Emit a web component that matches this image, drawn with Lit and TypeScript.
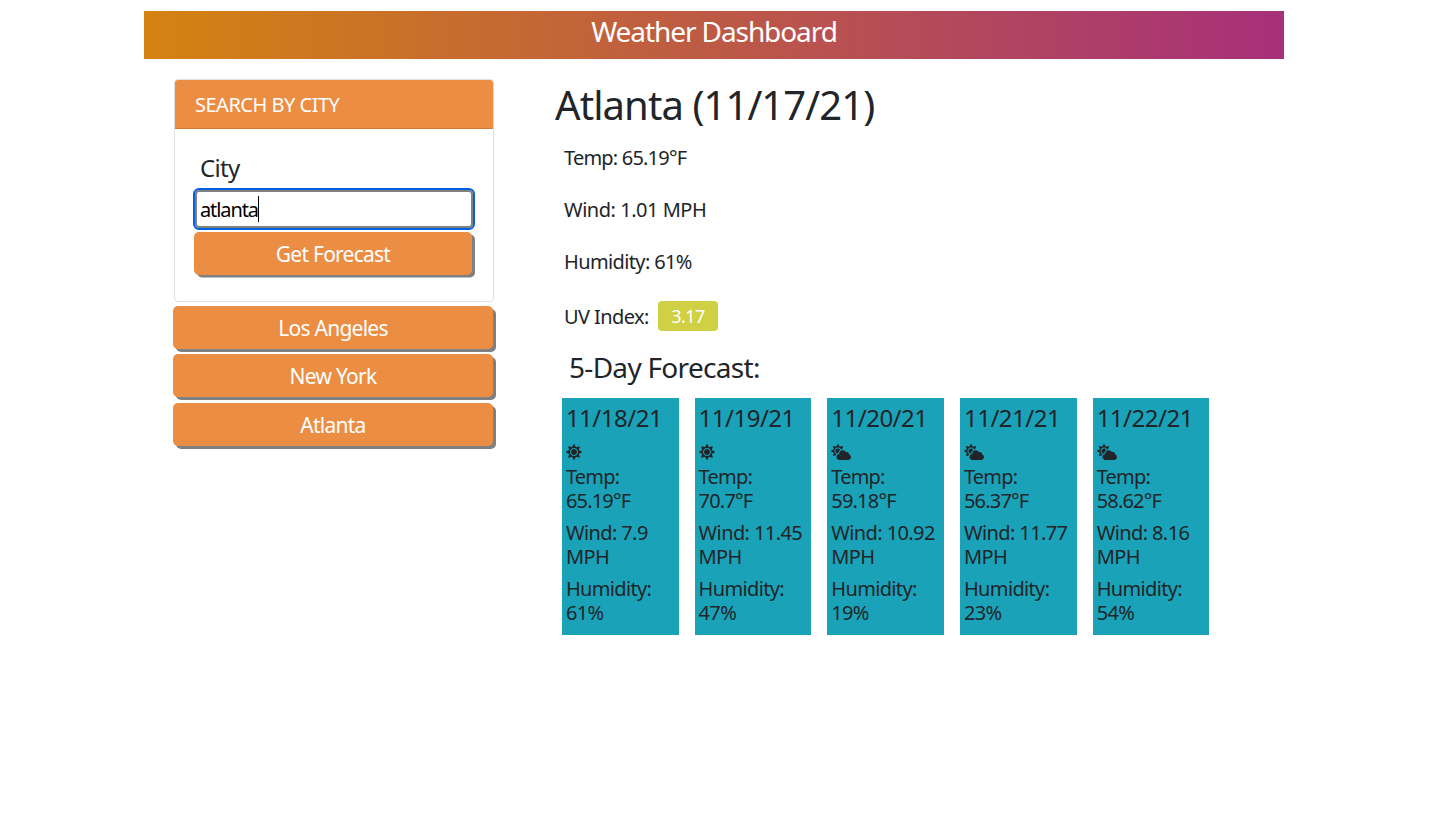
import { LitElement, html, css, svg } from "lit";
import { customElement, property, state } from "lit/decorators.js";

interface Day {
  date: string;
  icon: "sun" | "cloud-sun";
  temp: string;
  wind: string;
  humidity: string;
}

const ICONS = {
  sun: {
    box: "0 0 512 512",
    width: 16,
    d: "M256 160c-52.9 0-96 43.1-96 96s43.1 96 96 96 96-43.1 96-96-43.1-96-96-96zm246.4 80.5l-94.7-47.3 33.5-100.4c4.5-13.6-8.4-26.5-21.9-21.9l-100.4 33.5-47.4-94.8c-6.4-12.8-24.6-12.8-31 0l-47.3 94.7L92.7 70.8c-13.6-4.5-26.5 8.4-21.9 21.9l33.5 100.4-94.7 47.4c-12.8 6.4-12.8 24.6 0 31l94.7 47.3-33.5 100.5c-4.5 13.6 8.4 26.5 21.9 21.9l100.4-33.5 47.3 94.7c6.4 12.8 24.6 12.8 31 0l47.3-94.7 100.4 33.5c13.6 4.5 26.5-8.4 21.9-21.9l-33.5-100.4 94.7-47.3c13-6.5 13-24.7.2-31.1zm-155.9 106c-49.9 49.9-131.1 49.9-181 0-49.9-49.9-49.9-131.1 0-181 49.9-49.9 131.1-49.9 181 0 49.9 49.9 49.9 131.1 0 181z",
  },
  "cloud-sun": {
    box: "0 0 640 512",
    width: 20,
    d: "M575.2 325.7c.2-1.9.8-3.7.8-5.6 0-35.3-28.7-64-64-64-12.6 0-24.2 3.8-34.1 10-17.6-38.8-56.5-66-101.9-66-61.8 0-112 50.1-112 112 0 3 .7 5.8.9 8.7-49.6 3.7-88.9 44.7-88.9 95.3 0 53 43 96 96 96h272c53 0 96-43 96-96 0-42.1-27.2-77.4-64.8-90.4zm-430.4-22.6c-43.7-43.7-43.7-114.7 0-158.3 43.7-43.7 114.7-43.7 158.4 0 9.7 9.7 16.9 20.9 22.3 32.7 9.8-3.7 20.1-6 30.7-7.5L386 81.1c4-11.9-7.3-23.1-19.2-19.2L279 91.2 237.5 8.4C232-2.8 216-2.8 210.4 8.4L169 91.2 81.1 61.9C69.3 58 58 69.3 61.9 81.1l29.3 87.8-82.8 41.5c-11.2 5.6-11.2 21.6 0 27.2l82.8 41.4-29.3 87.8c-4 11.9 7.3 23.1 19.2 19.1l76.1-25.3c6.1-12.4 14-23.7 23.6-33.5-13.1-5.4-25.4-13.4-36-24zm-4.8-79.2c0 40.8 29.3 74.8 67.9 82.3 8-4.7 16.3-8.8 25.2-11.7 5.4-44.3 31-82.5 67.4-105C287.3 160.4 258 140 224 140c-46.3 0-84 37.6-84 83.9z",
  },
};

@customElement("day-card")
class DayCard extends LitElement {
  @property({ attribute: false }) day!: Day;

  static styles = css`
    :host {
      display: block;
      box-sizing: border-box;
      height: 237px;
      padding: 5px 4px 0;
      background: #19a2b8;
      color: #212529;
    }
    .date {
      margin: 0 0 12px;
      font-size: 24px;
      font-weight: 400;
      line-height: 29px;
      letter-spacing: -0.5px;
    }
    .icon {
      display: block;
      height: 16px;
      margin-bottom: 5px;
      fill: currentColor;
    }
    .row {
      margin: 0 0 8px;
      font-size: 20px;
      line-height: 24px;
      letter-spacing: -0.65px;
    }
    .temp {
      letter-spacing: -0.8px;
    }
    .wind {
      letter-spacing: -0.6px;
    }
  `;

  render() {
    const icon = ICONS[this.day.icon];
    return html`
      <h4 class="date">${this.day.date}</h4>
      <svg class="icon" viewBox=${icon.box} width=${icon.width} height="16">
        ${svg`<path d=${icon.d} />`}
      </svg>
      <p class="row temp">Temp: ${this.day.temp}°F</p>
      <p class="row wind">Wind: ${this.day.wind} MPH</p>
      <p class="row">Humidity: ${this.day.humidity}%</p>
    `;
  }
}

@customElement("app-root")
class AppRoot extends LitElement {
  @state() private query = "atlanta";
  @state() private history = ["Los Angeles", "New York", "Atlanta"];

  private days: Day[] = [
    { date: "11/18/21", icon: "sun", temp: "65.19", wind: "7.9", humidity: "61" },
    { date: "11/19/21", icon: "sun", temp: "70.7", wind: "11.45", humidity: "47" },
    { date: "11/20/21", icon: "cloud-sun", temp: "59.18", wind: "10.92", humidity: "19" },
    { date: "11/21/21", icon: "cloud-sun", temp: "56.37", wind: "11.77", humidity: "23" },
    { date: "11/22/21", icon: "cloud-sun", temp: "58.62", wind: "8.16", humidity: "54" },
  ];

  static styles = css`
    :host {
      display: block;
      box-sizing: border-box;
      height: 818px;
      padding: 11px 0 0 144px;
      background: #fff;
      color: #212529;
      font-family: "Noto Sans", "Open Sans", sans-serif;
      font-size: 20px;
      line-height: 24px;
      letter-spacing: -0.5px;
    }
    .banner {
      width: 1140px;
      height: 48px;
      margin: 0;
      background: linear-gradient(to right, #d48311, #a6307a);
      color: #fff;
      font-size: 28px;
      font-weight: 400;
      line-height: 40px;
      letter-spacing: -1.08px;
      text-align: center;
    }
    .columns {
      display: grid;
      grid-template-columns: 320px 660px;
      column-gap: 61px;
      align-items: start;
      padding: 20px 0 0 30px;
    }
    .panel {
      box-sizing: border-box;
      height: 223px;
      border: 1px solid #dfdfdf;
      border-radius: 4px;
      overflow: hidden;
    }
    .panel-title {
      height: 48px;
      padding-left: 20px;
      border-bottom: 1px solid #cf7c3a;
      background: #eb8e44;
      color: #fff;
      line-height: 50px;
    }
    .panel-body {
      padding: 24px 20px 0 19px;
    }
    .label {
      display: block;
      padding-left: 6px;
      font-size: 24px;
      line-height: 30px;
      letter-spacing: -0.7px;
    }
    .field {
      display: flex;
      align-items: center;
      box-sizing: border-box;
      width: 278px;
      height: 38px;
      margin: 7px 0 4px 1px;
      padding-left: 3px;
      border: 2px solid #808080;
      border-radius: 4px;
      outline: 2px solid #0060df;
      color: #000;
    }
    .query {
      padding-top: 2px;
      letter-spacing: -1.1px;
    }
    .caret {
      width: 1px;
      height: 26px;
      background: #000;
    }
    .btn {
      display: block;
      width: 320px;
      height: 43px;
      padding: 0;
      border: 0;
      border-radius: 5px;
      background: #eb8e44;
      box-shadow: 3px 3px 0 #808080;
      color: #fff;
      font: inherit;
      font-size: 21px;
      line-height: 45px;
      letter-spacing: -0.75px;
      text-align: center;
    }
    .submit {
      width: 278px;
      box-shadow: 3px 2.5px 0 #808080;
    }
    .history {
      display: grid;
      row-gap: 5.5px;
      margin: 3.9px 0 0 -1px;
    }
    .city {
      margin: 2px 0 0;
      font-size: 40px;
      font-weight: 400;
      line-height: 48px;
      letter-spacing: -0.92px;
    }
    .stats {
      display: grid;
      row-gap: 28px;
      padding: 17px 0 0 9px;
    }
    .stat {
      margin: 0;
      letter-spacing: -0.63px;
    }
    .temp {
      letter-spacing: -0.8px;
    }
    .wind {
      letter-spacing: -0.47px;
    }
    .uv {
      display: flex;
      align-items: center;
      gap: 9px;
      margin: 27px 0 0 9px;
      height: 30px;
    }
    .uv-label {
      padding-top: 2px;
      width: 85px;
      letter-spacing: -0.6px;
    }
    .badge {
      width: 60px;
      height: 30px;
      border-radius: 4px;
      background: #d0d045;
      color: #fff;
      font-size: 18px;
      line-height: 31px;
      text-align: center;
    }
    .subtitle {
      margin: 19px 0 14px 14px;
      font-size: 28px;
      font-weight: 400;
      line-height: 34px;
      letter-spacing: -0.7px;
    }
    .days {
      display: grid;
      grid-template-columns: repeat(5, 116.7px);
      column-gap: 16px;
      padding-left: 6.9px;
    }
  `;

  render() {
    return html`
      <h3 class="banner">Weather Dashboard</h3>
      <main class="columns">
        <aside>
          <section class="panel">
            <div class="panel-title">SEARCH BY CITY</div>
            <div class="panel-body">
              <span class="label">City</span>
              <div class="field" role="textbox"><span class="query">${this.query}</span><span class="caret"></span></div>
              <button class="btn submit">Get Forecast</button>
            </div>
          </section>
          <div class="history">
            ${this.history.map((c) => html`<button class="btn">${c}</button>`)}
          </div>
        </aside>
        <section>
          <h1 class="city">Atlanta (11/17/21)</h1>
          <div class="stats">
            <p class="stat temp">Temp: 65.19°F</p>
            <p class="stat wind">Wind: 1.01 MPH</p>
            <p class="stat">Humidity: 61%</p>
          </div>
          <div class="uv"><span class="uv-label">UV Index:</span><span class="badge">3.17</span></div>
          <h3 class="subtitle">5-Day Forecast:</h3>
          <div class="days">
            ${this.days.map((d) => html`<day-card .day=${d}></day-card>`)}
          </div>
        </section>
      </main>
    `;
  }
}
